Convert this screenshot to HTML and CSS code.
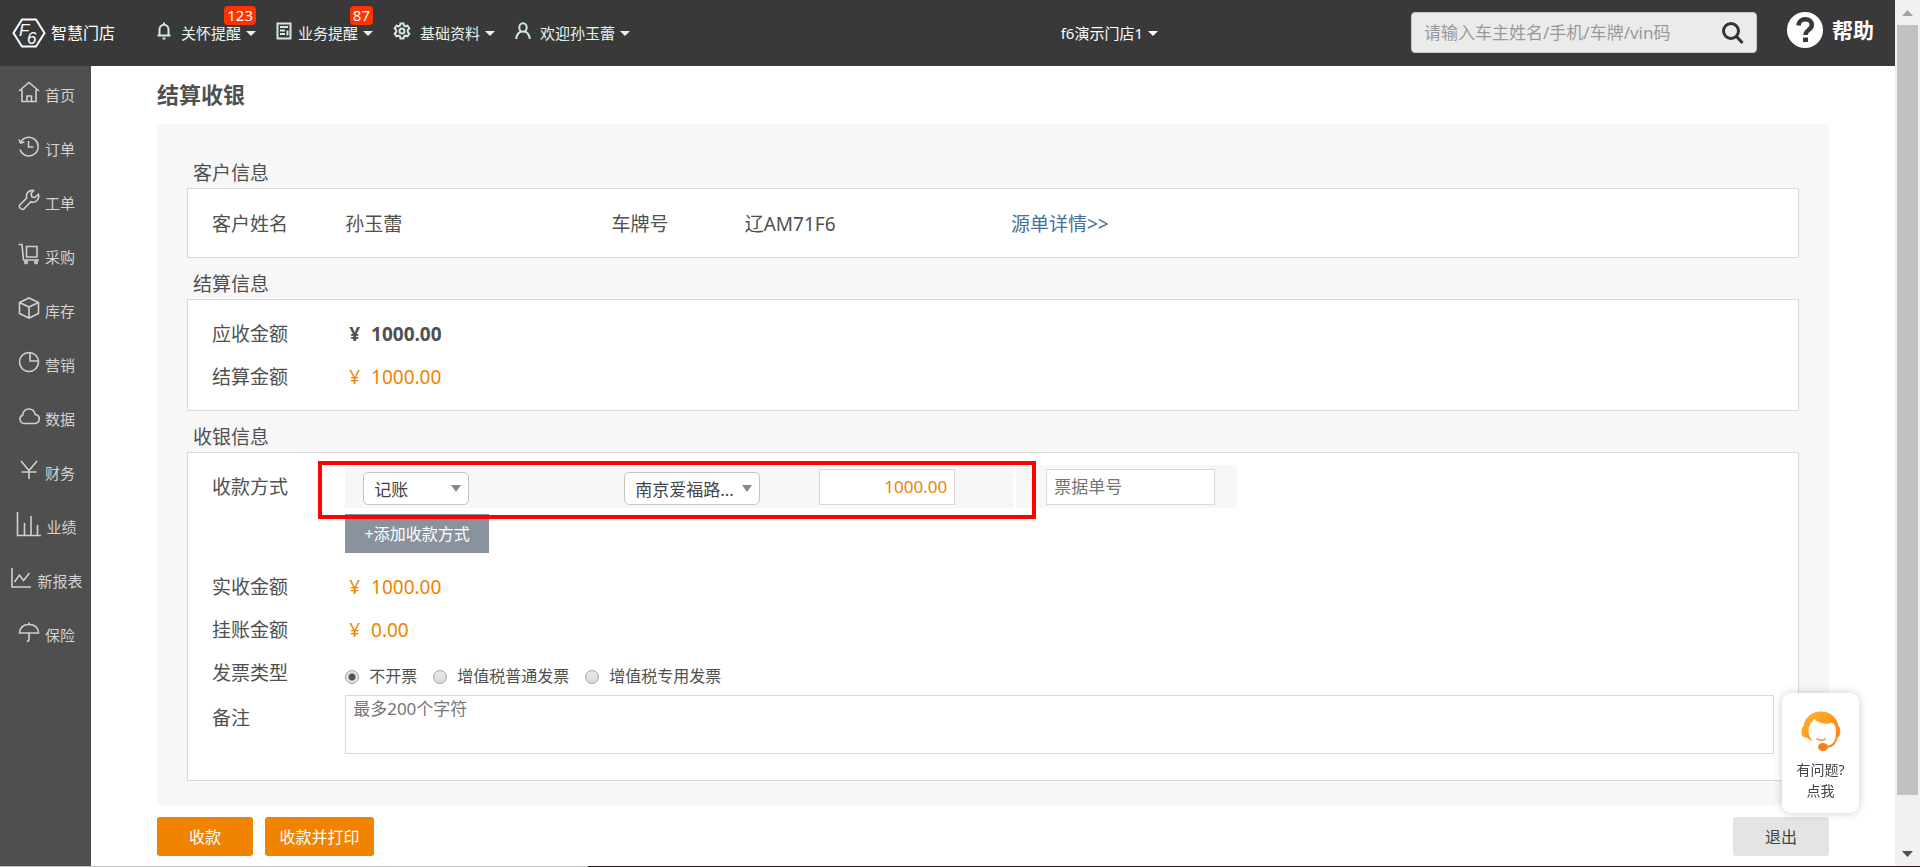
FILE: index.html
```html
<!DOCTYPE html>
<html lang="zh-CN">
<head>
<meta charset="utf-8">
<title>结算收银</title>
<link rel="stylesheet" href="styles.css">
</head>
<body>
<div class="window">
  <div class="app">
    <header class="topbar">
      <a class="logo" href="#">
        <svg class="logo-mark" viewBox="0 0 34 30" aria-hidden="true">
          <path d="M10 1.500h14L32.500 15 24 28.500H10L1.500 15z" fill="none" stroke="#fff" stroke-width="2"/>
          <text x="7" y="18" class="logo-letter">F</text>
          <text x="15" y="26" class="logo-letter">6</text>
        </svg>
        <span class="logo-name">智慧门店</span>
      </a>
      <nav class="topnav">
        <button class="topnav-item topnav-care" type="button">
          <svg width="14" height="18" viewBox="0 0 14 18"><path d="M7 .5v2M2.500 13.500V7.500a4.500 4.800 0 0 1 9 0v6M.5 13.500h13M5.500 16.500h3"/></svg>
          <span>关怀提醒</span><i class="caret"></i><span class="badge">123</span>
        </button>
        <button class="topnav-item topnav-biz" type="button">
          <svg width="16" height="18" viewBox="0 0 16 18"><path d="M1.500 1.500h13v15h-13zM4 5h8M4 8.500h5M4 12h5M11.500 8.500v5"/></svg>
          <span>业务提醒</span><i class="caret"></i><span class="badge">87</span>
        </button>
        <button class="topnav-item topnav-data" type="button">
          <svg width="18" height="18" viewBox="0 0 18 18"><path d="M7.500 1.500h3l.5 2 1.500.8 2-.7 1.800 2.700-1.500 1.500v2.400l1.500 1.500-1.800 2.700-2-.7-1.500.8-.5 2h-3l-.5-2-1.500-.8-2 .7-1.800-2.700 1.500-1.500V7.800L1.700 6.300l1.800-2.700 2 .7L7 3.500z"/><circle cx="9" cy="9" r="2.500"/></svg>
          <span>基础资料</span><i class="caret"></i>
        </button>
        <button class="topnav-item topnav-user" type="button">
          <svg width="16" height="18" viewBox="0 0 16 18"><ellipse cx="8" cy="5.500" rx="3.700" ry="4.300"/><path d="M1.200 17c.3-4 2-6.200 4.800-7.500M14.800 17c-.3-4-2-6.200-4.800-7.500"/></svg>
          <span>欢迎孙玉蕾</span><i class="caret"></i>
        </button>
      </nav>
      <button class="store" type="button"><span>f6演示门店1</span><i class="caret"></i></button>
      <form class="search">
        <input class="search-input" type="text" aria-label="搜索" placeholder="请输入车主姓名/手机/车牌/vin码">
        <button class="search-button" type="button" aria-label="搜索">
          <svg width="24" height="24" viewBox="0 0 24 24"><circle cx="10" cy="10" r="7.500"/><path d="M15.500 15.500l6 6.500"/></svg>
        </button>
      </form>
      <a class="help" href="#">
        <svg width="36" height="36" viewBox="0 0 36 36" aria-hidden="true"><circle cx="18" cy="18" r="18" fill="#fff"/><path d="M11.500 13.500c.3-4 3-6.200 6.700-6.200 4 0 6.600 2.200 6.600 5.600 0 4.800-6.300 5.200-6.300 10.100" fill="none" stroke="#393939" stroke-width="4.500"/><path d="M16 25.500h5v4.500h-5z" fill="#393939"/></svg>
        <span class="help-text">帮助</span>
      </a>
    </header>

    <div class="body">
      <nav class="sidebar">
        <a class="side-item" href="#"><svg viewBox="0 0 22 22"><path d="M1 10L11 1.500 21 10M4 8.500v12h14v-12M9 20.500v-5.500h4.500v5.500"/></svg><span>首页</span></a>
        <a class="side-item" href="#"><svg viewBox="0 0 22 22"><path d="M2.500 7.500A9.300 9.300 0 1 1 2 14.500M1 4.500l1.500 3.500 4-1M10.500 6v6h5"/></svg><span>订单</span></a>
        <a class="side-item" href="#"><svg viewBox="0 0 22 22"><path d="M15.500 1.500a5.800 5.800 0 0 0-6.800 7.500L1.800 16c-1.600 1.800 1.900 5.600 4 4l7-7.200a5.800 5.800 0 0 0 7.500-7.500l-3.300 3.200-3-.5-1-3.200z"/></svg><span>工单</span></a>
        <a class="side-item" href="#"><svg viewBox="0 0 22 22"><path d="M.5 1.500h3.500l1.500 15.500h15.500M8.500 3.500h10.500v10.500H8.500z"/><circle cx="8" cy="19.300" r="1.300"/><circle cx="18" cy="19.300" r="1.300"/></svg><span>采购</span></a>
        <a class="side-item" href="#"><svg viewBox="0 0 22 22"><path d="M11 1l9.500 4.500v11L11 21l-9.500-4.500v-11zM1.500 5.500L11 10l9.500-4.500M11 10v11"/></svg><span>库存</span></a>
        <a class="side-item" href="#"><svg viewBox="0 0 22 22"><circle cx="11" cy="11" r="9.500"/><path d="M12 1.500V10h8.500"/></svg><span>营销</span></a>
        <a class="side-item" href="#"><svg viewBox="0 0 22 22"><path d="M5.500 18.500a4.500 4.500 0 0 1-.8-8.500c.5-4 3-6 6.300-6s5.500 2 6.200 5.500c5.500.8 5.300 8.500-.2 9z"/></svg><span>数据</span></a>
        <a class="side-item" href="#"><svg viewBox="0 0 22 22"><path d="M3 2l8 9.500L19 2M11 11.500V20M3.500 13h15"/></svg><span>财务</span></a>
        <a class="side-item side-item-wide" href="#"><svg viewBox="0 0 25 25"><path d="M1.500 0v23.500H25M8.500 23V11M15 23V4M21.500 23V13"/></svg><span>业绩</span></a>
        <a class="side-item" href="#"><svg viewBox="0 0 22 22"><path d="M2 1v19h19M4.500 15l5-7 4 5.500 6-7.500"/></svg><span>新报表</span></a>
        <a class="side-item" href="#"><svg viewBox="0 0 22 22"><path d="M1.500 12c.5-6 4.500-8.500 9.500-8.500s9 2.500 9.500 8.500zM11 3.500V1.500M11 12v6.500c0 1.500-.8 1.800-2.300 1.800"/></svg><span>保险</span></a>
      </nav>

      <main class="main">
        <h1 class="page-title">结算收银</h1>
        <div class="panel">
          <h2 class="section-title">客户信息</h2>
          <section class="box box-customer">
            <div class="row row-customer">
              <span class="cell">客户姓名</span><span class="cell">孙玉蕾</span>
              <span class="cell">车牌号</span><span class="cell">辽AM71F6</span>
              <a class="cell link" href="#">源单详情&gt;&gt;</a>
            </div>
          </section>

          <h2 class="section-title">结算信息</h2>
          <section class="box box-settle">
            <div class="row"><span class="cell">应收金额</span><span class="cell amount amount-due"><span>¥</span><span>1000.00</span></span></div>
            <div class="row"><span class="cell">结算金额</span><span class="cell amount"><span>¥</span><span>1000.00</span></span></div>
          </section>

          <h2 class="section-title">收银信息</h2>
          <section class="box box-cash">
            <div class="row row-pay">
              <span class="cell pay-label">收款方式</span>
              <div class="cell pay">
                <div class="pay-line">
                  <div class="pay-main">
                    <span class="select select-method"><select aria-label="收款方式"><option>记账</option></select></span>
                    <span class="select select-store"><select aria-label="记账单位"><option>南京爱福路...</option></select></span>
                    <input class="field field-amount" type="text" aria-label="金额" value="1000.00">
                  </div>
                  <div class="pay-bill"><input class="field field-bill" type="text" aria-label="票据单号" placeholder="票据单号"></div>
                  <div class="highlight"></div>
                </div>
                <button class="add-button" type="button">+添加收款方式</button>
              </div>
            </div>
            <div class="row"><span class="cell">实收金额</span><span class="cell amount"><span>¥</span><span>1000.00</span></span></div>
            <div class="row"><span class="cell">挂账金额</span><span class="cell amount"><span>¥</span><span>0.00</span></span></div>
            <div class="row">
              <span class="cell">发票类型</span>
              <div class="cell radios">
                <label class="radio"><input type="radio" name="invoice" checked><span>不开票</span></label>
                <label class="radio"><input type="radio" name="invoice"><span>增值税普通发票</span></label>
                <label class="radio"><input type="radio" name="invoice"><span>增值税专用发票</span></label>
              </div>
            </div>
            <div class="row row-note">
              <label class="cell" for="note">备注</label>
              <div class="cell note-cell"><textarea class="note" id="note" placeholder="最多200个字符"></textarea></div>
            </div>
          </section>
        </div>
        <footer class="actions">
          <button class="button button-primary" type="button">收款</button>
          <button class="button button-primary button-print" type="button">收款并打印</button>
          <button class="button button-exit" type="button">退出</button>
        </footer>
      </main>
    </div>
  </div>
  <div class="scrollbar" aria-hidden="true">
    <svg width="25" height="25" viewBox="0 0 25 25"><path d="M7 16l5.500-6 5.500 6z" fill="#a3a3a3"/></svg>
    <div class="scroll-thumb"></div>
    <svg class="scroll-down" width="25" height="25" viewBox="0 0 25 25"><path d="M7 9h11l-5.500 6z" fill="#505050"/></svg>
  </div>
</div>
<button class="service" type="button">
  <svg width="40" height="40" viewBox="0 0 40 40" aria-hidden="true">
    <defs><linearGradient id="hair" x1="0" y1="0" x2="1" y2="1"><stop offset="0" stop-color="#ffb52e"/><stop offset="1" stop-color="#ff7f17"/></linearGradient></defs>
    <path d="M2.500 15C4 6 11 .5 20 .5S36 6 37.500 15c2.500 2 2.500 8 0 11h-3c1-8 .5-12-3.500-14.500C25 14 17 12.500 13 7.500c0 3-5.500 4.500-5.500 12 0 4 1 7 4 10.500-3-1-4.500-2-5.500-3.500C2.500 27 .5 24.500.5 20.500c0-2.500.8-4.500 2-5.500z" fill="url(#hair)"/>
    <path d="M36 25c-1 6-4 10.500-10 11" fill="none" stroke="#ff8a1c" stroke-width="2"/>
    <ellipse cx="22" cy="36" rx="5" ry="4" fill="#ff7f17"/>
    <path d="M15.500 27.500c3 2.300 6.500 2.300 9.500 0" fill="none" stroke="#ff8a1c" stroke-width="1.500"/>
  </svg>
  <span class="service-text">有问题?<br>点我</span>
</button>
<div class="bottom-edge" aria-hidden="true"></div>
</body>
</html>
```

FILE: styles.css
```css
* { box-sizing: border-box; }

body {
  margin: 0;
  background: #fff;
  color: #505050;
  font-family: "Noto Sans", "Noto Sans CJK SC", sans-serif;
  font-size: 19px;
}

button, input, select, textarea { font-family: inherit; margin: 0; }
button { border: 0; cursor: pointer; }
a { color: inherit; text-decoration: none; }

.window { display: flex; min-height: 100vh; }
.app { flex: 1; min-width: 0; display: flex; flex-direction: column; }

/* Top bar */
.topbar {
  display: flex;
  align-items: center;
  height: 66px;
  padding: 0 21px 0 12px;
  background: #393939;
  color: #fff;
}
.logo { display: flex; align-items: center; gap: 5px; width: 145px; }
.logo-mark { width: 34px; height: 30px; }
.logo-letter { font: italic 17px "Liberation Sans", sans-serif; fill: #fff; }
.logo-name { font-size: 16px; line-height: 30px; }

.topnav { display: flex; gap: 20px; flex: 1; }
.topnav-item {
  position: relative;
  display: flex;
  align-items: center;
  padding: 0;
  background: none;
  color: #e6f5ee;
  font-size: 15px;
  line-height: 26px;
}
.topnav-item svg { fill: none; stroke: #d4e8e1; stroke-width: 2; margin: 0 9px 4px 0; }
.topnav-care svg { margin-right: 10px; }
.topnav-biz svg { margin-right: 6px; }
.caret {
  border: 5px solid transparent;
  border-top-color: currentColor;
  border-bottom: 0;
  margin-left: 5px;
}
.badge {
  position: absolute;
  right: 0;
  top: -14px;
  padding: 0 3px;
  border-radius: 4px;
  background: #ff3300;
  color: #fff;
  font-size: 15px;
  line-height: 19px;
}
.store {
  display: flex;
  align-items: center;
  padding: 0;
  margin-right: 253px;
  background: none;
  color: #fff;
  font-size: 15px;
  line-height: 26px;
}
.search {
  display: flex;
  align-items: center;
  width: 346px;
  height: 41px;
  margin: 0 30px 1px 0;
  border: 1px solid #c8c8c8;
  border-radius: 4px;
  background: #ebebeb;
}
.search-input {
  flex: 1;
  min-width: 0;
  height: 39px;
  padding: 0 12px;
  border: 0;
  background: none;
  font-size: 17px;
}
.search-input::placeholder { color: #999; }
.search-button { display: flex; padding: 0 11px 0 0; background: none; }
.search-button svg { fill: none; stroke: #333; stroke-width: 3; }
.help {
  display: flex;
  align-items: center;
  gap: 9px;
  height: 60px;
  align-self: flex-start;
  font-size: 21px;
  font-weight: bold;
}
.help-text { padding-bottom: 2px; }

/* Side menu */
.body { display: flex; flex: 1; }
.sidebar { width: 91px; flex: none; background: #4f4f4f; color: #d2d2d2; }
.side-item {
  display: flex;
  justify-content: center;
  align-items: center;
  gap: 5px;
  height: 54px;
  padding-left: 2px;
  font-size: 15px;
}
.side-item svg {
  width: 22px;
  height: 22px;
  margin-bottom: 2px;
  fill: none;
  stroke: #d0d0d0;
  stroke-width: 1.6;
}
.side-item span { padding-top: 3px; }
.side-item-wide svg { width: 25px; height: 25px; }

/* Page */
.main { flex: 1; min-width: 0; padding: 0 66px; }
.page-title { margin: 0; padding-bottom: 2px; font-size: 22px; line-height: 56px; }
.panel { padding: 23px 30px 24px; background: #f7f7f7; }
.section-title {
  margin: 0;
  padding: 11px 6px 0;
  font-size: 19px;
  font-weight: normal;
  line-height: 30px;
}
.box { padding: 13px 3px 11px 9px; border: 1px solid #d9d9d9; background: #fff; }
.box-customer { padding-top: 14px; }
.box-cash { padding: 12px 3px 26px 9px; }
.row {
  display: grid;
  grid-template-columns: 1fr 11fr;
  line-height: 43px;
}
.row-customer { grid-template-columns: 1fr 2fr 1fr 2fr 6fr; }
.cell { min-width: 0; padding: 0 15px; white-space: nowrap; }
.row-customer .cell { padding-right: 0; }
.link { color: #44709d; }
.amount { display: flex; gap: 11px; padding-left: 19px; color: #f08300; }
.amount-due { color: #505050; font-weight: bold; }

/* Payment line */
.row-pay { padding-bottom: 13px; }
.pay-label { padding-top: 1px; }
.pay-line {
  position: relative;
  display: inline-flex;
  gap: 2px;
  height: 43px;
  margin-bottom: 6px;
}
.pay { display: flex; flex-direction: column; align-items: flex-start; }
.pay-main, .pay-bill { display: flex; align-items: center; background: #f7f7f7; }
.pay-main { padding: 0 59px 0 18px; }
.pay-bill { padding: 0 22px 0 30px; }
.select { position: relative; display: flex; margin-top: 4px; }
.select::after {
  content: "";
  position: absolute;
  right: 8px;
  top: 13px;
  border: 5px solid transparent;
  border-top: 7px solid #888;
  border-bottom: 0;
  pointer-events: none;
}
.select select {
  appearance: none;
  width: 100%;
  height: 33px;
  padding: 2px 0 0 10px;
  border: 1px solid #c6c6c6;
  border-radius: 5px;
  background: #fff;
  color: #444;
  font-size: 17px;
}
.select-method { width: 106px; margin-right: 155px; }
.select-store { width: 136px; margin-right: 59px; }
.field {
  height: 36px;
  padding: 0 7px;
  border: 1px solid #d9d9d9;
  background: #fff;
  font-size: 17px;
}
.field::placeholder, .note::placeholder { color: #757575; }
.field-amount { width: 136px; color: #f08300; text-align: right; }
.field-bill { width: 169px; }
.highlight {
  position: absolute;
  inset: -4px 201px -11px -27px;
  border: 4px solid #ff0000;
  pointer-events: none;
}
.add-button {
  width: 144px;
  height: 39px;
  padding: 0 0 2px;
  background: #89929d;
  color: #fff;
  font-size: 16px;
}

/* Invoice and note */
.radios { display: flex; gap: 16px; height: 43px; padding-top: 6px; font-size: 16px; }
.radio { display: flex; align-items: center; gap: 10px; }
.radio input {
  appearance: none;
  width: 14px;
  height: 14px;
  border: 1px solid #a5a5a5;
  border-radius: 50%;
  background: linear-gradient(#e8e8e8, #d9d9d9);
}
.radio input:checked { background: radial-gradient(circle, #555 3px, #e2e2e2 4px); }
.radio span { line-height: 37px; }
.row-note { line-height: 47px; }
.note-cell { padding-right: 21px; }
.note {
  display: block;
  width: 100%;
  height: 59px;
  padding: 1px 7px;
  border: 1px solid #d9d9d9;
  background: #fff;
  font-size: 17px;
  line-height: 24px;
  resize: none;
}

/* Footer buttons */
.actions { display: flex; gap: 12px; padding: 12px 0 10px; }
.button { width: 96px; height: 39px; padding: 0 0 1px; border-radius: 3px; font-size: 16px; }
.button-primary { background: #f08300; color: #fff; }
.button-print { width: 109px; }
.button-exit { margin-left: auto; background: #e4e4e4; color: #444; }

/* Scroll bar, floating help, bottom edge */
.scrollbar { display: flex; flex-direction: column; width: 25px; background: #f1f1f1; }
.scroll-thumb { flex: 1; margin: 0 2px; background: #c1c1c1; }
.scroll-down { margin-top: 47px; }
.service {
  position: fixed;
  right: 61px;
  bottom: 54px;
  display: flex;
  flex-direction: column;
  align-items: center;
  gap: 8px;
  width: 77px;
  height: 120px;
  padding: 18px 0 0;
  border-radius: 9px;
  background: #fff;
  box-shadow: 0 0 10px rgba(0, 0, 0, .2);
  color: #444;
}
.service-text { font-size: 14px; line-height: 21px; }
.bottom-edge {
  position: fixed;
  left: 0;
  right: 0;
  bottom: 0;
  height: 1px;
  background: linear-gradient(90deg, #c1c1c1 588px, #22181c 588px);
}
```
